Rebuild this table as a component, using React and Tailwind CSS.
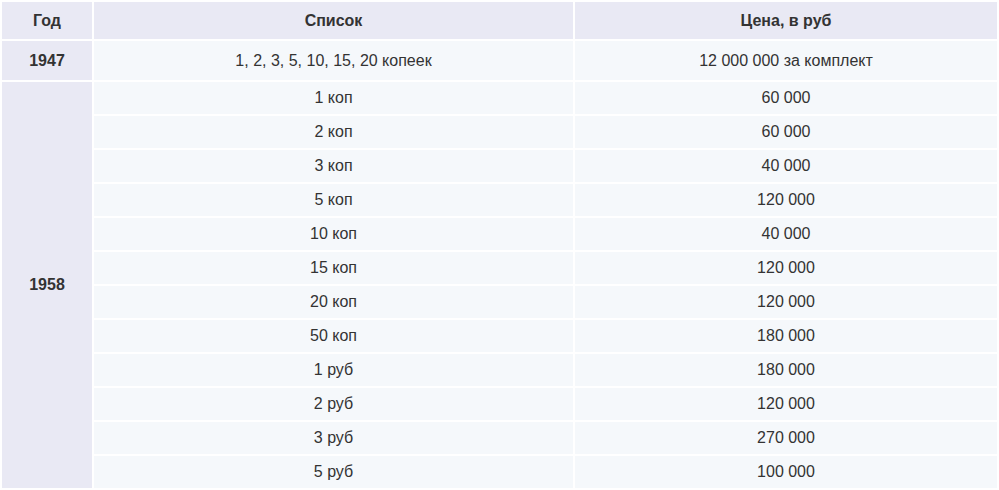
const rows = [
  ["1 коп", "60 000"],
  ["2 коп", "60 000"],
  ["3 коп", "40 000"],
  ["5 коп", "120 000"],
  ["10 коп", "40 000"],
  ["15 коп", "120 000"],
  ["20 коп", "120 000"],
  ["50 коп", "180 000"],
  ["1 руб", "180 000"],
  ["2 руб", "120 000"],
  ["3 руб", "270 000"],
  ["5 руб", "100 000"],
];

export default function App() {
  return (
    <div className="w-[999px] h-[490px] overflow-hidden bg-white font-['Liberation_Sans',Arial,sans-serif] text-[16px] text-[#333]">
      <table className="w-full border-separate border-spacing-[2px] table-fixed">
        <colgroup>
          <col className="w-[90px]" />
          <col className="w-[479px]" />
          <col />
        </colgroup>
        <thead>
          <tr className="h-[37px]">
            <th className="bg-[#e9e9f4] font-bold text-center">Год</th>
            <th className="bg-[#e9e9f4] font-bold text-center">Список</th>
            <th className="bg-[#e9e9f4] font-bold text-center">Цена, в руб</th>
          </tr>
        </thead>
        <tbody>
          <tr className="h-[39px]">
            <td className="bg-[#e9e9f4] font-bold text-center">1947</td>
            <td className="bg-[#f5f8fb] text-center">1, 2, 3, 5, 10, 15, 20 копеек</td>
            <td className="bg-[#f5f8fb] text-center">12 000 000 за комплект</td>
          </tr>
          {rows.map(([name, price], i) => (
            <tr key={name} className="h-[32px]">
              {i === 0 && (
                <td rowSpan={rows.length} className="bg-[#e9e9f4] font-bold text-center">
                  1958
                </td>
              )}
              <td className="bg-[#f5f8fb] text-center">{name}</td>
              <td className="bg-[#f5f8fb] text-center">{price}</td>
            </tr>
          ))}
        </tbody>
      </table>
    </div>
  );
}
